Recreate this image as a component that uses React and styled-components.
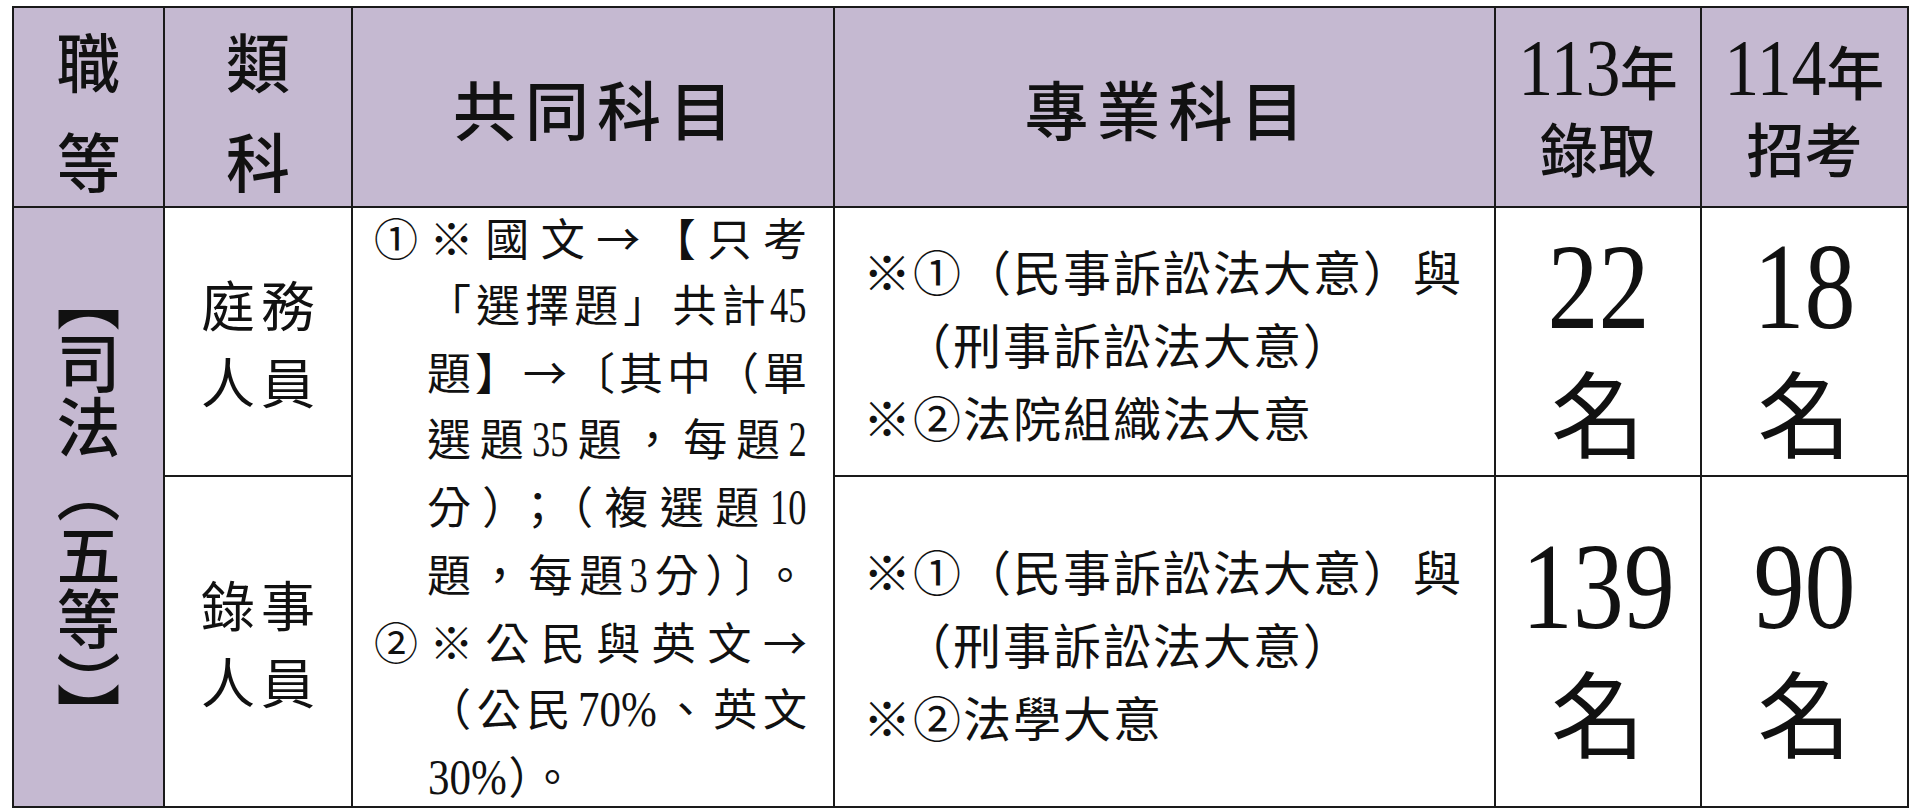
import React from "react";
import styled, { createGlobalStyle } from "styled-components";

const LAVENDER = "#c5b9d1";
const LINE = "#1a1a1a";

const GlobalStyle = createGlobalStyle`
  body {
    margin: 0;
    background: #fff;
    color: #111;
    font-family: "Noto Sans CJK TC", "Noto Sans", sans-serif;
  }
`;

const Page = styled.div`
  padding: 6px 0 0 12px;
`;

const Table = styled.div`
  display: grid;
  grid-template-columns: 151px 188px 482px 661px 206px 207px;
  grid-template-rows: 200px 269px 331px;
  width: 1897px;
  box-sizing: border-box;
  border-left: 2px solid ${LINE};
  border-top: 2px solid ${LINE};
`;

const Cell = styled.div`
  box-sizing: border-box;
  min-height: 0;
  border-right: 2px solid ${LINE};
  border-bottom: 2px solid ${LINE};
  background: ${(p) => (p.$shade ? LAVENDER : "#fff")};
  grid-row: ${(p) => (p.$rows ? `span ${p.$rows}` : "auto")};
  display: flex;
  flex-direction: column;
  align-items: ${(p) => p.$align || "center"};
  justify-content: center;
`;

// narrow serif numerals, squeezed horizontally like the printed table
const NumBox = styled.span`
  display: inline-block;
  font-family: "Liberation Serif", serif;
  font-size: ${(p) => p.$size};
  transform: scaleX(${(p) => p.$sx});
  margin: 0 ${(p) => p.$m}em;
`;

const Digits = ({ children, size = "1.15em", sx = 0.72 }) => {
  const m = -((1 - sx) * String(children).length * 0.25);
  return (
    <NumBox $size={size} $sx={sx} $m={m}>
      {children}
    </NumBox>
  );
};

const HeadStack = styled.div`
  font-size: 64px;
  line-height: 100px;
  font-weight: 500;
  text-align: center;
  margin-top: 4px;
`;

const HeadTitle = styled.div`
  font-size: 64px;
  font-weight: 500;
  letter-spacing: 8px;
  padding-left: 8px;
`;

const YearHead = styled.div`
  font-size: 58px;
  line-height: 77px;
  font-weight: 500;
  text-align: center;
  margin-top: 2px;
`;

const Side = styled.div`
  writing-mode: vertical-rl;
  font-size: 64px;
  line-height: 1;
  font-weight: 500;
`;

const Kind = styled.div`
  font-size: 54px;
  line-height: 77px;
  letter-spacing: 6px;
  padding-left: 6px;
  text-align: center;
`;

const CommonList = styled.div`
  align-self: stretch;
  padding: 0 26px 0 21px;
  font-size: 44px;
  line-height: 66px;
`;

const CommonLine = styled.div`
  text-align: justify;
  text-align-last: ${(p) => (p.$last ? "left" : "justify")};
  padding-left: ${(p) => (p.$hang ? "0" : "53px")};
`;

const SpecList = styled.div`
  padding: 4px 0 0 28px;
  font-size: 48px;
  line-height: 73px;
  letter-spacing: 2px;
`;

const SpecLine = styled.div`
  padding-left: ${(p) => (p.$indent ? "40px" : "0")};
`;

const CountNum = styled.div`
  font-family: "Liberation Serif", serif;
  font-size: 123px;
  line-height: 123px;
  margin-bottom: 14px;
`;

const CountUnit = styled.div`
  font-size: 94px;
  line-height: 96px;
`;

const counts = [
  { kind: ["庭務", "人員"], spec: "法院組織法大意", y113: "22", y114: "18" },
  { kind: ["錄事", "人員"], spec: "法學大意", y113: "139", y114: "90" },
];

const Count = ({ value }) => (
  <Cell>
    <CountNum>
      <Digits size="1em" sx={0.83}>
        {value}
      </Digits>
    </CountNum>
    <CountUnit>名</CountUnit>
  </Cell>
);

export default function App() {
  return (
    <Page>
      <GlobalStyle />
      <Table>
        <Cell $shade>
          <HeadStack>
            職<br />等
          </HeadStack>
        </Cell>
        <Cell $shade>
          <HeadStack>
            類<br />科
          </HeadStack>
        </Cell>
        <Cell $shade>
          <HeadTitle>共同科目</HeadTitle>
        </Cell>
        <Cell $shade>
          <HeadTitle>專業科目</HeadTitle>
        </Cell>
        <Cell $shade>
          <YearHead>
            <Digits size="1.4em" sx={0.86}>
              113
            </Digits>
            年<br />
            錄取
          </YearHead>
        </Cell>
        <Cell $shade>
          <YearHead>
            <Digits size="1.4em" sx={0.86}>
              114
            </Digits>
            年<br />
            招考
          </YearHead>
        </Cell>

        <Cell $shade $rows={2}>
          <Side>【司法（五等）】</Side>
        </Cell>

        {counts.map((row, i) => (
          <React.Fragment key={row.y113}>
            <Cell>
              <Kind>
                {row.kind[0]}
                <br />
                {row.kind[1]}
              </Kind>
            </Cell>
            {i === 0 && (
              <Cell $rows={2} $align="stretch">
                <CommonList>
                  <CommonLine $hang>①※國文→【只考</CommonLine>
                  <CommonLine>
                    「選擇題」共計<Digits>45</Digits>
                  </CommonLine>
                  <CommonLine>題】→〔其中（單</CommonLine>
                  <CommonLine>
                    選題<Digits>35</Digits>題，每題<Digits>2</Digits>
                  </CommonLine>
                  <CommonLine>
                    分）；（複選題<Digits>10</Digits>
                  </CommonLine>
                  <CommonLine>
                    題，每題<Digits>3</Digits>分）〕。
                  </CommonLine>
                  <CommonLine $hang>②※公民與英文→</CommonLine>
                  <CommonLine>
                    （公民<Digits sx={0.85}>70%</Digits>、英文
                  </CommonLine>
                  <CommonLine $last>
                    <Digits sx={0.85}>30%</Digits>）。
                  </CommonLine>
                </CommonList>
              </Cell>
            )}
            <Cell $align="flex-start">
              <SpecList>
                <SpecLine>※①（民事訴訟法大意）與</SpecLine>
                <SpecLine $indent>（刑事訴訟法大意）</SpecLine>
                <SpecLine>※②{row.spec}</SpecLine>
              </SpecList>
            </Cell>
            <Count value={row.y113} />
            <Count value={row.y114} />
          </React.Fragment>
        ))}
      </Table>
    </Page>
  );
}
